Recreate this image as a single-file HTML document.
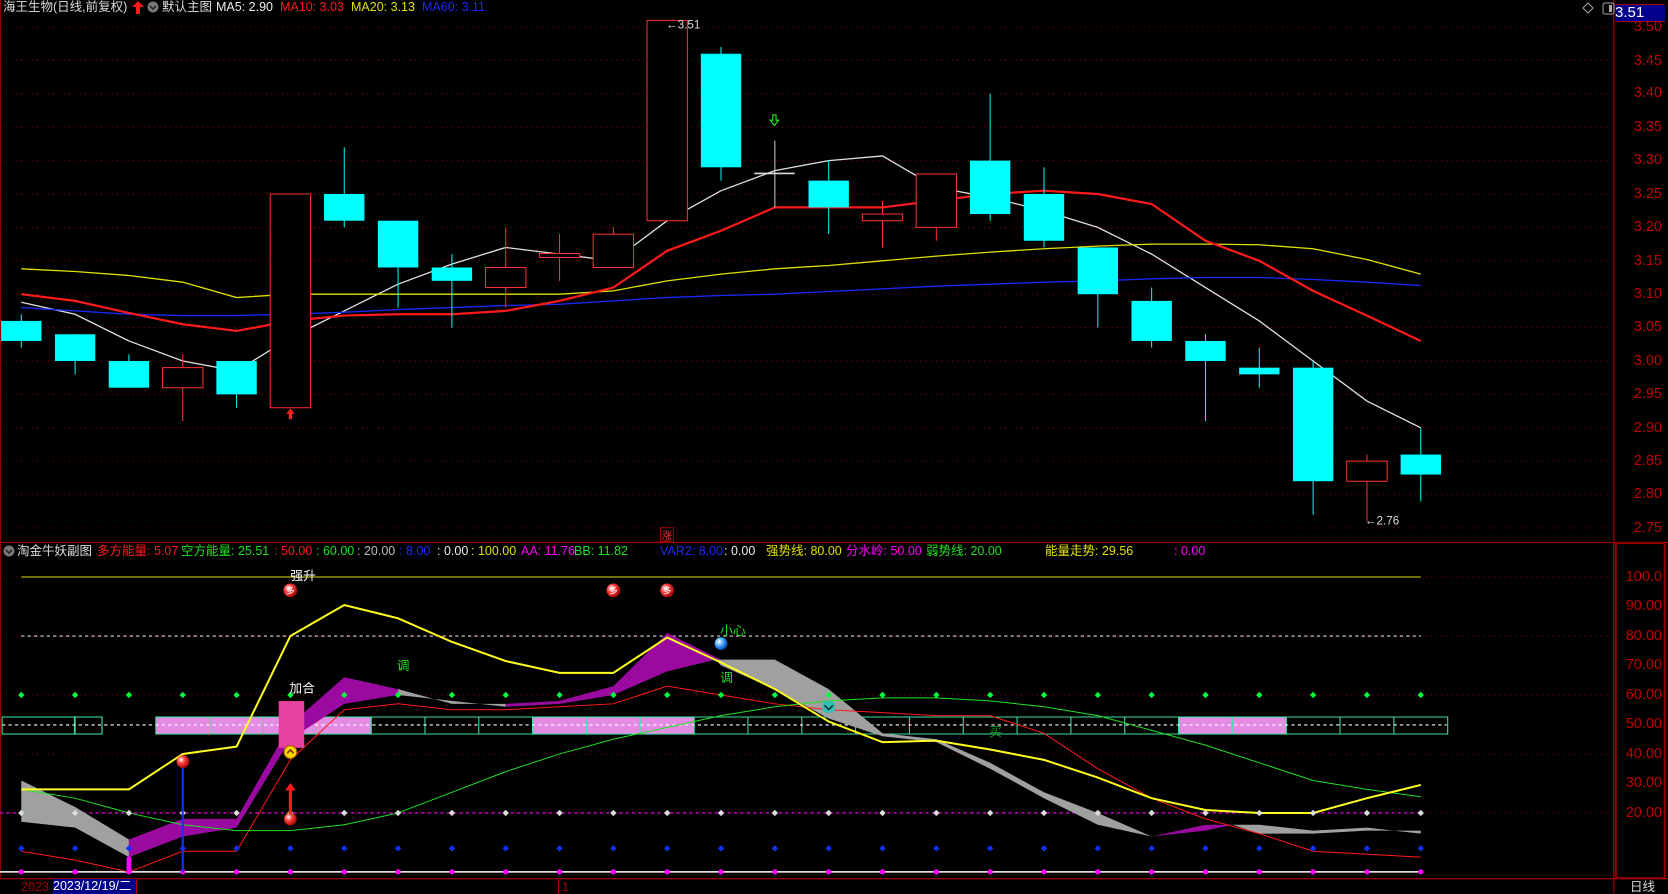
<!DOCTYPE html>
<html><head><meta charset="utf-8"><style>
html,body{margin:0;padding:0;background:#000;}
#w{position:relative;width:1668px;height:894px;overflow:hidden;background:#000;font-family:"Liberation Sans","Noto Sans CJK SC",sans-serif;}
.t{position:absolute;font-size:12.5px;white-space:nowrap;line-height:14px;}
.ax{position:absolute;font-size:14.5px;color:#c00000;right:6px;line-height:14px;}
svg{position:absolute;left:0;top:0}
</style></head><body><div id="w">
<svg width="1668" height="894" viewBox="0 0 1568 840.4" preserveAspectRatio="none">
<defs>
<pattern id="pg" x="-5.3" y="0" width="50.6" height="840.4" patternUnits="userSpaceOnUse">
<path d="M25.3 650.3l3 3-3 3-3-3z" fill="#00ff40"/>
<path d="M25.3 761.2l3 3-3 3-3-3z" fill="#ddd"/>
<path d="M25.3 794.5l3 3-3 3-3-3z" fill="#1030ff"/>
<circle cx="25.3" cy="819.6" r="2.5" fill="#ff00ff"/>
</pattern>
<radialGradient id="rb" cx="35%" cy="35%" r="70%"><stop offset="0" stop-color="#fff"/><stop offset="0.4" stop-color="#ff4040"/><stop offset="1" stop-color="#a00000"/></radialGradient>
<radialGradient id="bb" cx="35%" cy="35%" r="70%"><stop offset="0" stop-color="#fff"/><stop offset="0.5" stop-color="#40a0ff"/><stop offset="1" stop-color="#0040a0"/></radialGradient>
</defs>
<g stroke="#800000" stroke-dasharray="1,4" stroke-width="1">
<line x1="0" x2="1512" y1="25.4" y2="25.4"/><line x1="0" x2="1512" y1="56.8" y2="56.8"/><line x1="0" x2="1512" y1="88.2" y2="88.2"/><line x1="0" x2="1512" y1="119.6" y2="119.6"/><line x1="0" x2="1512" y1="151" y2="151"/><line x1="0" x2="1512" y1="182.4" y2="182.4"/><line x1="0" x2="1512" y1="213.8" y2="213.8"/><line x1="0" x2="1512" y1="245.2" y2="245.2"/><line x1="0" x2="1512" y1="276.5" y2="276.5"/><line x1="0" x2="1512" y1="307.9" y2="307.9"/><line x1="0" x2="1512" y1="339.3" y2="339.3"/><line x1="0" x2="1512" y1="370.7" y2="370.7"/><line x1="0" x2="1512" y1="402.1" y2="402.1"/><line x1="0" x2="1512" y1="433.5" y2="433.5"/><line x1="0" x2="1512" y1="464.9" y2="464.9"/><line x1="0" x2="1512" y1="496.3" y2="496.3"/>
<line x1="0" x2="1512" y1="542.4" y2="542.4"/><line x1="0" x2="1512" y1="597.9" y2="597.9"/><line x1="0" x2="1512" y1="653.3" y2="653.3"/><line x1="0" x2="1512" y1="708.8" y2="708.8"/><line x1="0" x2="1512" y1="764.2" y2="764.2"/>
</g>
<g stroke="#900000" fill="none">
<line x1="1517" y1="0" x2="1517" y2="840" stroke-width="1.2"/>
<line x1="0" y1="510" x2="1568" y2="510" stroke-width="1.2"/>
<line x1="0" y1="826" x2="1568" y2="826" stroke-width="1.2"/>
<rect x="1519" y="510.5" width="46" height="315" stroke-width="2"/>
<line x1="0.5" y1="0" x2="0.5" y2="826"/>
</g>
<g transform="matrix(50.6 0 0 -627.9 20 2223.05)">
<g fill="none" stroke-width="1.3">
<polyline vector-effect="non-scaling-stroke" stroke="#e0e0e0" points="0,3.088 1,3.07 2,3.03 3,3.0 4,2.985 5,3.035 6,3.075 7,3.115 8,3.145 9,3.17 10,3.16 11,3.15 12,3.21 13,3.255 14,3.285 15,3.3 16,3.307 17,3.26 18,3.245 19,3.225 20,3.2 21,3.16 22,3.11 23,3.06 24,3.0 25,2.94 26,2.9"/>
<polyline vector-effect="non-scaling-stroke" stroke="#e0e000" points="0,3.138 1,3.134 2,3.128 3,3.118 4,3.095 5,3.1 6,3.1 7,3.1 8,3.1 9,3.1 10,3.1 11,3.105 12,3.12 13,3.13 14,3.138 15,3.143 16,3.15 17,3.157 18,3.163 19,3.168 20,3.172 21,3.175 22,3.175 23,3.174 24,3.168 25,3.152 26,3.13"/>
<polyline vector-effect="non-scaling-stroke" stroke="#1a2aff" points="0,3.08 1,3.075 2,3.07 3,3.068 4,3.068 5,3.07 6,3.073 7,3.077 8,3.08 9,3.083 10,3.085 11,3.09 12,3.095 13,3.098 14,3.1 15,3.104 16,3.108 17,3.112 18,3.115 19,3.118 20,3.12 21,3.123 22,3.125 23,3.125 24,3.122 25,3.118 26,3.113"/>
<polyline vector-effect="non-scaling-stroke" stroke="#ff1a1a" stroke-width="2.2" points="0,3.1 1,3.09 2,3.072 3,3.055 4,3.045 5,3.06 6,3.068 7,3.07 8,3.07 9,3.075 10,3.09 11,3.11 12,3.165 13,3.195 14,3.23 15,3.23 16,3.23 17,3.24 18,3.25 19,3.255 20,3.25 21,3.235 22,3.18 23,3.15 24,3.105 25,3.068 26,3.03"/>
</g>
<g stroke="#00ffff">
<line vector-effect="non-scaling-stroke" x1="0" x2="0" y1="3.02" y2="3.07"/><line vector-effect="non-scaling-stroke" x1="1" x2="1" y1="2.98" y2="3.04"/><line vector-effect="non-scaling-stroke" x1="2" x2="2" y1="2.96" y2="3.01"/><line vector-effect="non-scaling-stroke" x1="4" x2="4" y1="2.93" y2="3.0"/><line vector-effect="non-scaling-stroke" x1="6" x2="6" y1="3.2" y2="3.32"/><line vector-effect="non-scaling-stroke" x1="7" x2="7" y1="3.08" y2="3.21"/><line vector-effect="non-scaling-stroke" x1="8" x2="8" y1="3.05" y2="3.16"/><line vector-effect="non-scaling-stroke" x1="13" x2="13" y1="3.27" y2="3.47"/><line vector-effect="non-scaling-stroke" x1="15" x2="15" y1="3.19" y2="3.3"/><line vector-effect="non-scaling-stroke" x1="18" x2="18" y1="3.21" y2="3.4"/><line vector-effect="non-scaling-stroke" x1="19" x2="19" y1="3.17" y2="3.29"/><line vector-effect="non-scaling-stroke" x1="20" x2="20" y1="3.05" y2="3.17"/><line vector-effect="non-scaling-stroke" x1="21" x2="21" y1="3.02" y2="3.11"/><line vector-effect="non-scaling-stroke" x1="22" x2="22" y1="2.91" y2="3.04"/><line vector-effect="non-scaling-stroke" x1="23" x2="23" y1="2.96" y2="3.02"/><line vector-effect="non-scaling-stroke" x1="24" x2="24" y1="2.77" y2="3.0"/><line vector-effect="non-scaling-stroke" x1="26" x2="26" y1="2.79" y2="2.9"/>
</g>
<line vector-effect="non-scaling-stroke" x1="14" x2="14" y1="3.23" y2="3.33" stroke="#ccc"/>
<g fill="#00ffff">
<rect x="-0.375" width="0.75" y="3.03" height="0.03"/><rect x="0.625" width="0.75" y="3.0" height="0.04"/><rect x="1.625" width="0.75" y="2.96" height="0.04"/><rect x="3.625" width="0.75" y="2.95" height="0.05"/><rect x="5.625" width="0.75" y="3.21" height="0.04"/><rect x="6.625" width="0.75" y="3.14" height="0.07"/><rect x="7.625" width="0.75" y="3.12" height="0.02"/><rect x="12.625" width="0.75" y="3.29" height="0.17"/><rect x="14.625" width="0.75" y="3.23" height="0.04"/><rect x="17.625" width="0.75" y="3.22" height="0.08"/><rect x="18.625" width="0.75" y="3.18" height="0.07"/><rect x="19.625" width="0.75" y="3.1" height="0.07"/><rect x="20.625" width="0.75" y="3.03" height="0.06"/><rect x="21.625" width="0.75" y="3.0" height="0.03"/><rect x="22.625" width="0.75" y="2.98" height="0.01"/><rect x="23.625" width="0.75" y="2.82" height="0.17"/><rect x="25.625" width="0.75" y="2.83" height="0.03"/>
</g>
<g stroke="#ff3232" fill="#000">
<line vector-effect="non-scaling-stroke" x1="3" x2="3" y1="2.91" y2="3.01"/><line vector-effect="non-scaling-stroke" x1="9" x2="9" y1="3.08" y2="3.2"/><line vector-effect="non-scaling-stroke" x1="10" x2="10" y1="3.12" y2="3.19"/><line vector-effect="non-scaling-stroke" x1="11" x2="11" y1="3.14" y2="3.2"/><line vector-effect="non-scaling-stroke" x1="16" x2="16" y1="3.17" y2="3.24"/><line vector-effect="non-scaling-stroke" x1="17" x2="17" y1="3.18" y2="3.28"/><line vector-effect="non-scaling-stroke" x1="25" x2="25" y1="2.76" y2="2.86"/>
<rect vector-effect="non-scaling-stroke" x="2.625" width="0.75" y="2.96" height="0.03"/><rect vector-effect="non-scaling-stroke" x="4.625" width="0.75" y="2.93" height="0.32"/><rect vector-effect="non-scaling-stroke" x="8.625" width="0.75" y="3.11" height="0.03"/><rect vector-effect="non-scaling-stroke" x="9.625" width="0.75" y="3.155" height="0.006"/><rect vector-effect="non-scaling-stroke" x="10.625" width="0.75" y="3.14" height="0.05"/><rect vector-effect="non-scaling-stroke" x="11.625" width="0.75" y="3.21" height="0.3"/><rect vector-effect="non-scaling-stroke" x="15.625" width="0.75" y="3.21" height="0.01"/><rect vector-effect="non-scaling-stroke" x="16.625" width="0.75" y="3.2" height="0.08"/><rect vector-effect="non-scaling-stroke" x="24.625" width="0.75" y="2.82" height="0.03"/>
</g>
</g>
<path d="M273 384l-4 5h2.5v5h3v-5h2.5z" fill="#ff2020"/>
<path d="M728 118l-4-5h2.5v-5h3v5h2.5z" fill="none" stroke="#20ff20"/>
<line x1="709" y1="163" x2="747" y2="163" stroke="#ddd" stroke-width="1.5"/>
<text x="626" y="27" fill="#ddd" font-size="11">←3.51</text>
<text x="1283" y="493" fill="#ddd" font-size="11">←2.76</text>
<rect x="621" y="496" width="12" height="13" fill="#000" stroke="#900"/><text x="622" y="507" fill="#ff3030" font-size="10">涨</text>
<line x1="20" y1="542.4" x2="1335.6" y2="542.4" stroke="#e0e000"/>
<line x1="20" y1="597.9" x2="1335.6" y2="597.9" stroke="#ddd" stroke-dasharray="3,3"/>
<line x1="0" y1="764.2" x2="1335.6" y2="764.2" stroke="#ff00ff" stroke-dasharray="3,3"/>
<line x1="0" y1="819.6" x2="1335.6" y2="819.6" stroke="#fff" stroke-width="1.5"/>
<g stroke="#40e0a0" stroke-width="1">
<rect x="2" y="674" width="68" height="16" fill="#000"/>
<rect x="70.6" y="674" width="25.3" height="16" fill="#000"/>
<rect x="146.5" y="674" width="202.4" height="16" fill="#e48ce4"/>
<rect x="500.7" y="674" width="151.8" height="16" fill="#e48ce4"/>
<rect x="1107.9" y="674" width="101.2" height="16" fill="#e48ce4"/>
</g>
<g stroke="#40e0a0" fill="none">
<path d="M95.9 674v16M146.5 674h1214.4v16H146.5M197.1 674v16M247.7 674v16M298.3 674v16M348.9 674v16M399.5 674v16M450.1 674v16M500.7 674v16M551.3 674v16M601.9 674v16M652.5 674v16M703.1 674v16M753.7 674v16M804.3 674v16M854.9 674v16M905.5 674v16M956.1 674v16M1006.7 674v16M1057.3 674v16M1107.9 674v16M1158.5 674v16M1209.1 674v16M1259.7 674v16M1310.3 674v16"/>
</g>
<line x1="2" y1="681.5" x2="1360" y2="681.5" stroke="#fff" stroke-dasharray="3,3"/>
<g transform="matrix(50.6 0 0 -2.7725 20 819.65)">
<g fill="#a0a0a0">
<polygon points="0,31 1,22 2,11 2,5 1,15 0,17"/>
<polygon points="7,62 8,57 9,57 9,56 8,58 7,60"/>
<polygon points="12.9,72 14,72 15,62 16,47 17,45 18,37 19,27 20,20 21,12 21,12 20,16 19,25 18,35 17,44 16,46 15,52 14,62 13,70"/>
<polygon points="22.5,16 23,16 24,14 25,15 26,13 26,14 25,14 24,13 23,13"/>
</g>
<g fill="#9a0aa0">
<polygon points="2,11 3,18 4,18 5,50 6,66 7,62 7,60 6,57 5,45 4,15 3,12 2,5"/>
<polygon points="9,57 10,58 11,63 12,81 13,72 12.9,72 12,68 11,60 10,57 9,56"/>
<polygon points="21,12 22,16 22.5,16 22,14"/>
</g>
<g fill="none">
<polyline vector-effect="non-scaling-stroke" stroke="#ff1a1a" points="0,7 1,4 2,0 3,7 4,7 5,38 6,55 7,57 8,55 9,55 10,56 11,57 12,63 13,60 14,57 15,55 16,54 17,53 18,53 19,47 20,35 21,25 22,18 23,13 24,7 25,6 26,5"/>
<polyline vector-effect="non-scaling-stroke" stroke="#20e020" points="0,28 1,25 2,20 3,16 4,14 5,14 6,16 7,20 8,27 9,34 10,40 11,45 12,49 13,53 14,56 15,58 16,59 17,59 18,58 19,56 20,53 21,48 22,43 23,37 24,31 25,28 26,25.5"/>
<polyline vector-effect="non-scaling-stroke" stroke="#ffff20" stroke-width="2" points="0,28 1,28 2,28 3,40 4,42.5 5,80 6,90.5 7,86 8,78 9,71.5 10,67.5 11,67.5 12,79.5 13,71 14,62 15,51 16,44 17,44.5 18,41.5 19,38 20,32 21,25 22,21 23,20 24,20 25,25 26,29.5"/>
</g>
</g>
<rect x="-5.3" y="640" width="1366" height="185" fill="url(#pg)"/>
<line x1="171.8" y1="716" x2="171.8" y2="820" stroke="#1030ff" stroke-width="2"/>
<rect x="119" y="805" width="4.5" height="15" rx="2" fill="#ff00ff"/>
<rect x="262" y="659" width="24" height="44" fill="#e8409f"/>
<line x1="273" y1="770" x2="273" y2="741" stroke="#ff1a1a" stroke-width="3"/>
<path d="M268 743l5-7 5 7z" fill="#ff1a1a"/>
<circle cx="273" cy="707" r="6" fill="#ffd700" stroke="#a06000"/><path d="M270 708l3-3 3 3" stroke="#803000" fill="none" stroke-width="1.5"/>
<circle cx="172" cy="716" r="6" fill="url(#rb)"/><circle cx="273" cy="770" r="6" fill="url(#rb)"/>
<circle cx="273" cy="555" r="6.5" fill="url(#rb)"/><circle cx="576.6" cy="555" r="6.5" fill="url(#rb)"/><circle cx="627.2" cy="555" r="6.5" fill="url(#rb)"/>
<g fill="#fff" font-size="8"><text x="269" y="558">多</text><text x="572.6" y="558">多</text><text x="623.2" y="558">多</text></g>
<circle cx="677.8" cy="605" r="6" fill="url(#bb)"/>
<rect x="773" y="659" width="12" height="11" rx="4" fill="#30c0b0"/><path d="M775 663l4 4 4-4" stroke="#003030" fill="none" stroke-width="1.5"/>
<g font-size="12">
<text x="273" y="545" fill="#fff">强升</text>
<text x="272" y="651" fill="#fff">加合</text>
<text x="373" y="630" fill="#20e020">调</text>
<text x="677" y="641" fill="#20e020">调</text>
<text x="677" y="597" fill="#20e020">小心</text>
<text x="930" y="692" fill="#10a010">买</text>
</g>
</svg>

<div class="t" style="left:3px;top:0;color:#ddd">海王生物(日线,前复权)</div>
<svg style="left:132px;top:1px" width="12" height="13"><path d="M6 0l6 6H8v7H4V6H0z" fill="#ff1a1a"/></svg>
<svg style="left:147px;top:1px" width="12" height="12"><circle cx="6" cy="6" r="5.5" fill="#777"/><path d="M3 5l3 3 3-3" stroke="#222" fill="none" stroke-width="1.5"/></svg>
<div class="t" style="left:162px;top:0;color:#ddd">默认主图</div>
<div class="t" style="left:216px;top:0;color:#eee">MA5: 2.90</div>
<div class="t" style="left:280px;top:0;color:#ff1a1a">MA10: 3.03</div>
<div class="t" style="left:351px;top:0;color:#e0e000">MA20: 3.13</div>
<div class="t" style="left:422px;top:0;color:#1a2aff">MA60: 3.11</div>

<svg style="left:1582px;top:2px" width="34" height="14"><path d="M6 1l5 5-5 5-5-5z" fill="none" stroke="#aaa"/><rect x="21" y="1" width="11" height="11" rx="2" fill="none" stroke="#aaa"/><rect x="27" y="3" width="3" height="7" fill="#aaa"/></svg>
<div class="t" style="left:1615px;top:4px;width:50px;height:16px;background:#00008b;border-top:1px solid #a00;border-bottom:1px solid #a00;color:#fff;font-size:15px;line-height:16px">3.51</div>

<div class="ax" style="top:20px">3.50</div><div class="ax" style="top:54px">3.45</div><div class="ax" style="top:86px">3.40</div><div class="ax" style="top:120px">3.35</div><div class="ax" style="top:153px">3.30</div><div class="ax" style="top:187px">3.25</div><div class="ax" style="top:220px">3.20</div><div class="ax" style="top:254px">3.15</div><div class="ax" style="top:287px">3.10</div><div class="ax" style="top:320px">3.05</div><div class="ax" style="top:354px">3.00</div><div class="ax" style="top:387px">2.95</div><div class="ax" style="top:421px">2.90</div><div class="ax" style="top:454px">2.85</div><div class="ax" style="top:487px">2.80</div><div class="ax" style="top:521px">2.75</div>
<div class="ax" style="top:570px">100.0</div><div class="ax" style="top:599px">90.00</div><div class="ax" style="top:629px">80.00</div><div class="ax" style="top:658px">70.00</div><div class="ax" style="top:688px">60.00</div><div class="ax" style="top:717px">50.00</div><div class="ax" style="top:747px">40.00</div><div class="ax" style="top:776px">30.00</div><div class="ax" style="top:806px">20.00</div>

<svg style="left:3px;top:545px" width="12" height="12"><circle cx="6" cy="6" r="5.5" fill="#777"/><path d="M3 5l3 3 3-3" stroke="#222" fill="none" stroke-width="1.5"/></svg>
<div class="t" style="left:17px;top:544px;color:#ddd">淘金牛妖副图</div>
<div class="t" style="left:97px;top:544px;color:#ff1a1a">多方能量: 5.07</div>
<div class="t" style="left:181px;top:544px;color:#20e020">空方能量: 25.51</div>
<div class="t" style="left:274px;top:544px;color:#ff1a1a">: 50.00</div>
<div class="t" style="left:316px;top:544px;color:#20e020">: 60.00</div>
<div class="t" style="left:357px;top:544px;color:#bbb">: 20.00</div>
<div class="t" style="left:399px;top:544px;color:#1a2aff">: 8.00</div>
<div class="t" style="left:437px;top:544px;color:#eee">: 0.00</div>
<div class="t" style="left:471px;top:544px;color:#e0e000">: 100.00</div>
<div class="t" style="left:521px;top:544px;color:#ff00ff">AA: 11.76</div>
<div class="t" style="left:574px;top:544px;color:#20e020">BB: 11.82</div>
<div class="t" style="left:660px;top:544px;color:#1a2aff">VAR2: 8.00</div>
<div class="t" style="left:724px;top:544px;color:#eee">: 0.00</div>
<div class="t" style="left:766px;top:544px;color:#e0e000">强势线: 80.00</div>
<div class="t" style="left:846px;top:544px;color:#ff00ff">分水岭: 50.00</div>
<div class="t" style="left:926px;top:544px;color:#20e020">弱势线: 20.00</div>
<div class="t" style="left:1045px;top:544px;color:#e0e000">能量走势: 29.56</div>
<div class="t" style="left:1174px;top:544px;color:#ff00ff">: 0.00</div>

<div class="t" style="left:21px;top:880px;color:#a00000">2023</div>
<div class="t" style="left:53px;top:879px;width:83px;height:15px;background:#00008b;border-right:1px solid #a00;color:#fff">2023/12/19/二</div>
<div style="position:absolute;left:558px;top:879px;width:1px;height:15px;background:#900"></div>
<div class="t" style="left:562px;top:880px;color:#a00000">1</div>
<div class="t" style="left:1630px;top:880px;color:#ddd">日线</div>
</div></body></html>
